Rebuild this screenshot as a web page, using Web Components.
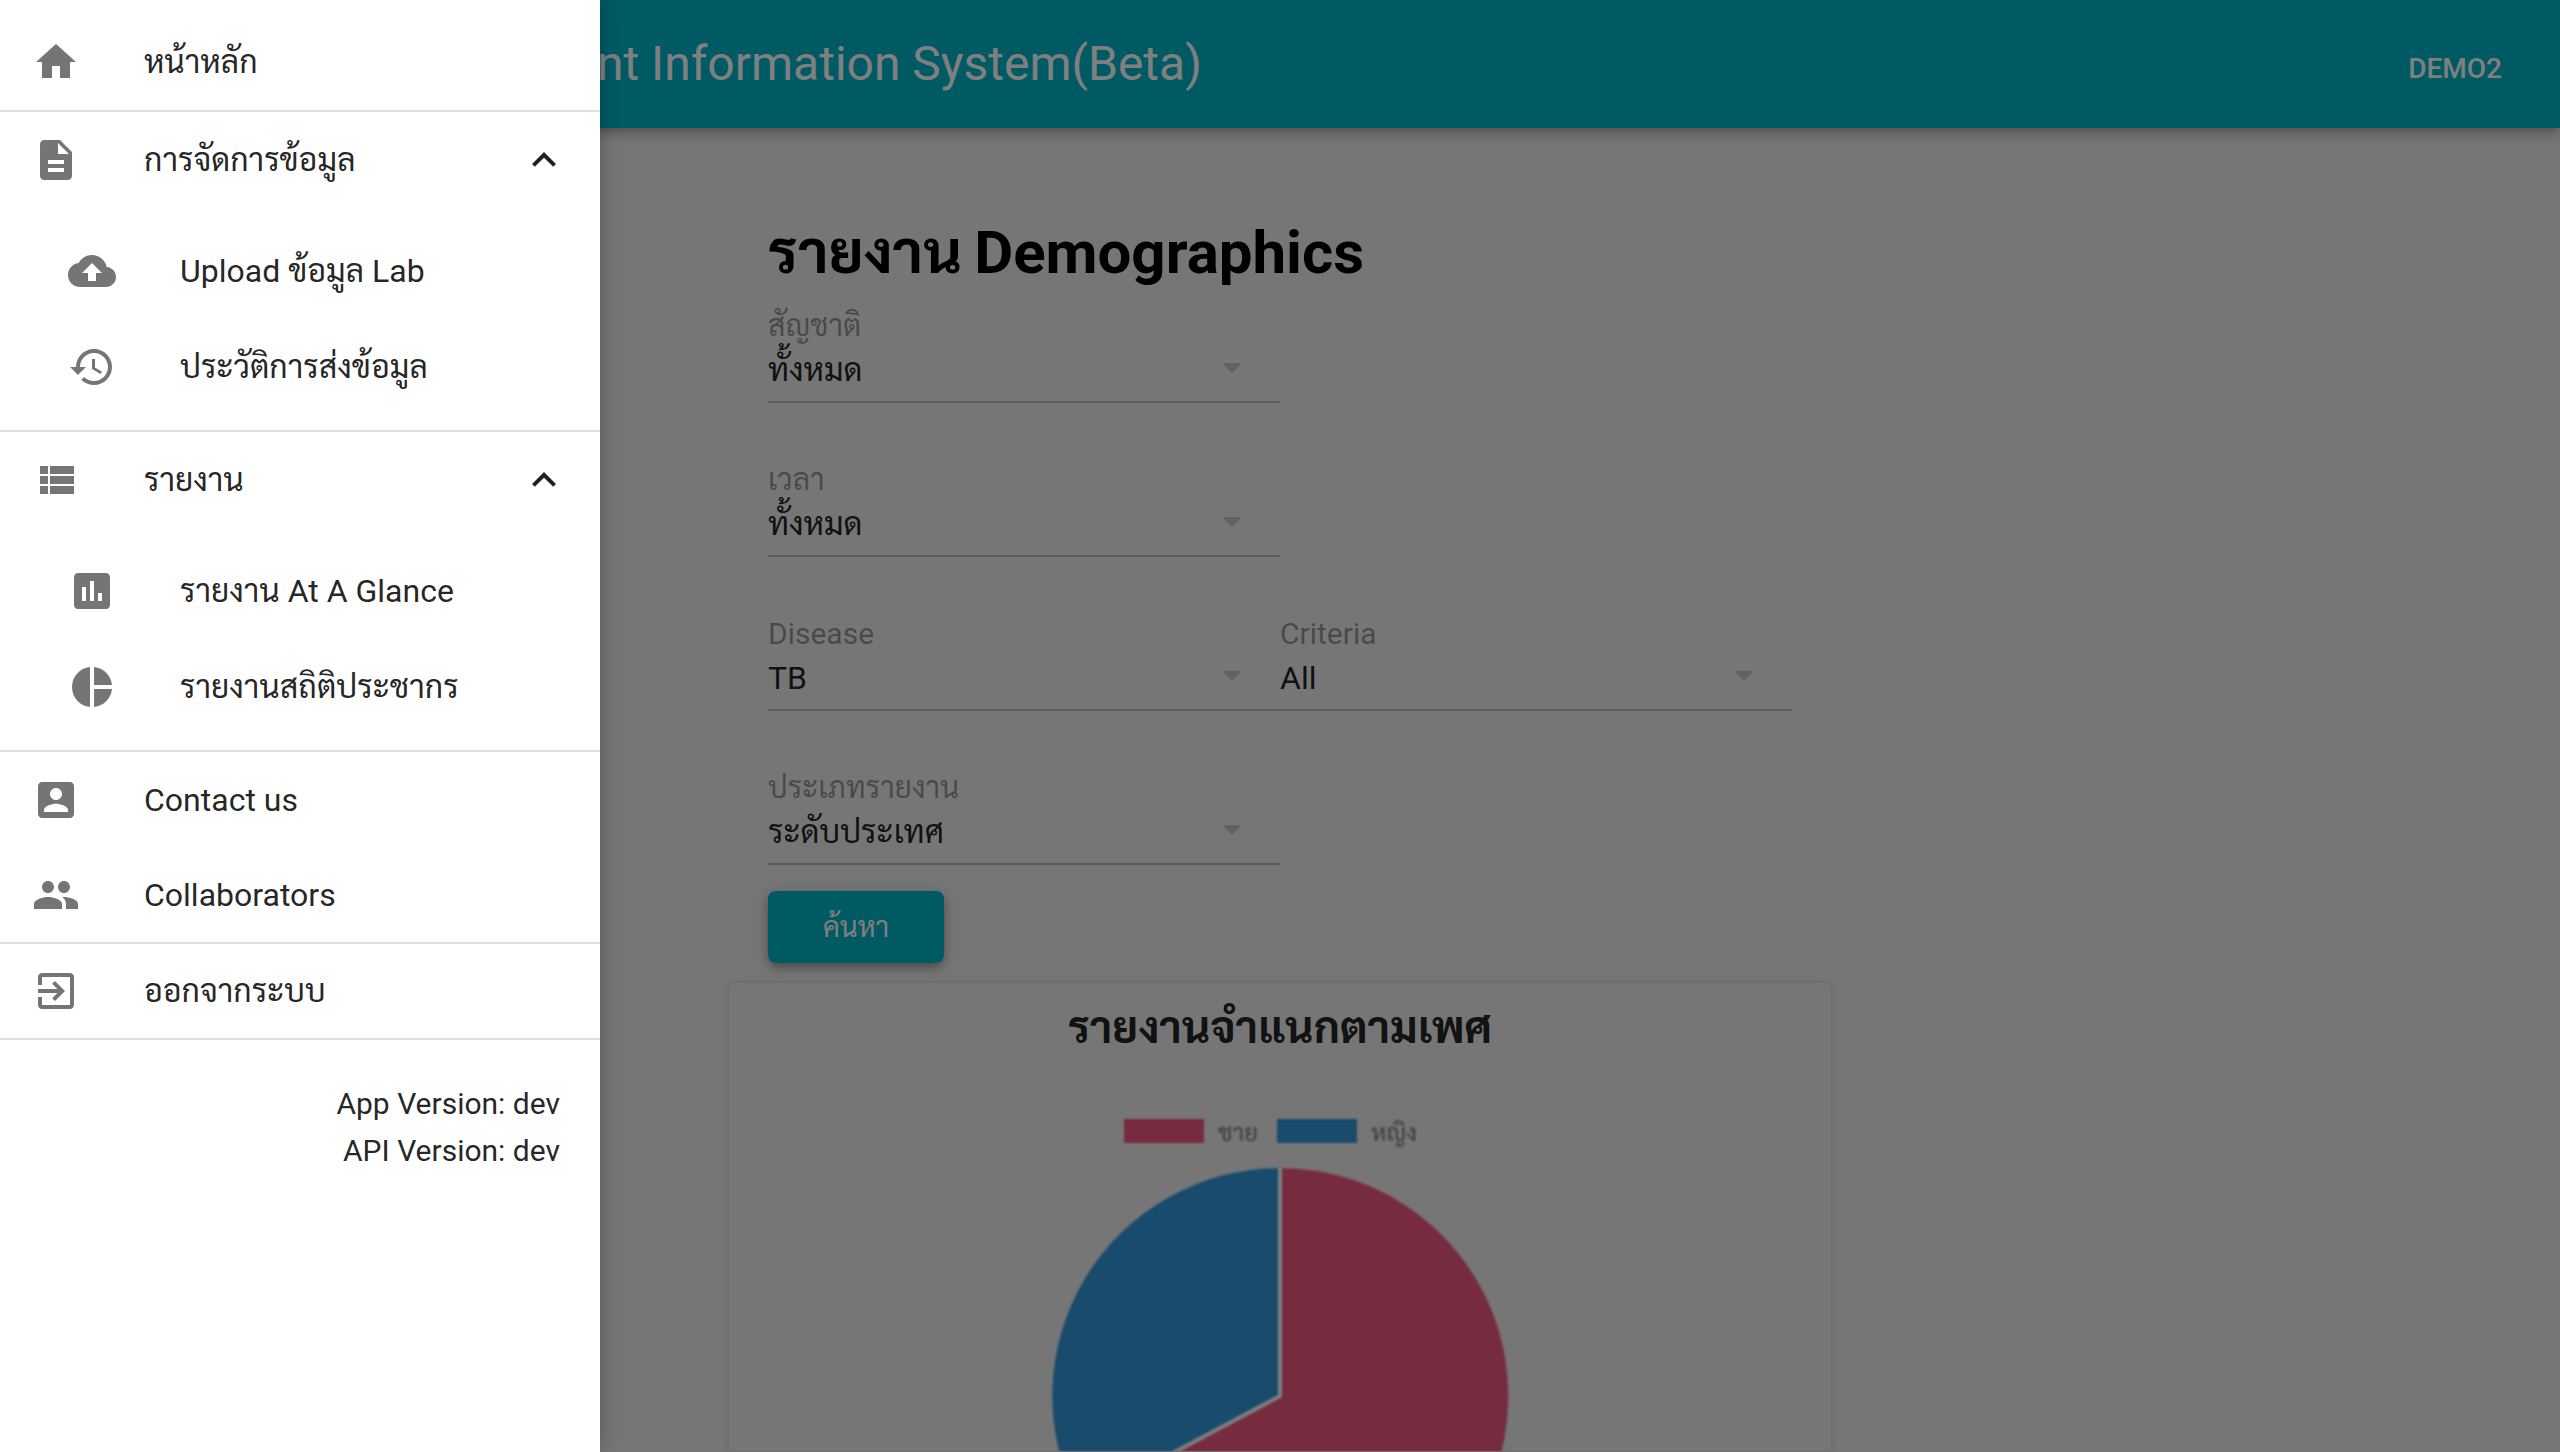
<!DOCTYPE html>
<html lang="th"><head><meta charset="utf-8"><title>Demographics</title>
<style>
html,body{margin:0;padding:0;height:1452px;overflow:hidden;background:#ececec}
body{font-family:Roboto,Sarabun,sans-serif;color:rgba(0,0,0,.87);position:relative}
</style></head><body>
<top-bar name="Patient Information System(Beta)" user="DEMO2"></top-bar>
<report-page heading="รายงาน Demographics">
  <form-select label="สัญชาติ" value="ทั้งหมด"></form-select>
  <form-select label="เวลา" value="ทั้งหมด" style="grid-column:1"></form-select>
  <form-select label="Disease" value="TB" style="grid-column:1"></form-select>
  <form-select label="Criteria" value="All"></form-select>
  <form-select label="ประเภทรายงาน" value="ระดับประเทศ" style="grid-column:1"></form-select>
  <action-button slot="action">ค้นหา</action-button>
  <chart-card slot="chart" heading="รายงานจำแนกตามเพศ"></chart-card>
</report-page>
<drawer-scrim></drawer-scrim>
<side-drawer>
  <nav-item icon="home" style="margin-top:14px">หน้าหลัก</nav-item>
  <nav-rule></nav-rule>
  <nav-item icon="description" open>การจัดการข้อมูล</nav-item>
  <nav-group>
    <nav-item icon="cloud_upload" nested>Upload ข้อมูล Lab</nav-item>
    <nav-item icon="history" nested>ประวัติการส่งข้อมูล</nav-item>
  </nav-group>
  <nav-rule></nav-rule>
  <nav-item icon="view_list" open>รายงาน</nav-item>
  <nav-group>
    <nav-item icon="assessment" nested>รายงาน At A Glance</nav-item>
    <nav-item icon="pie_chart" nested>รายงานสถิติประชากร</nav-item>
  </nav-group>
  <nav-rule></nav-rule>
  <nav-item icon="account_box" style="height:95px">Contact us</nav-item>
  <nav-item icon="people" style="height:95px">Collaborators</nav-item>
  <nav-rule></nav-rule>
  <nav-item icon="exit_to_app" style="height:94px">ออกจากระบบ</nav-item>
  <nav-rule></nav-rule>
  <version-note><div>App Version: dev</div><div>API Version: dev</div></version-note>
</side-drawer>
<script>
const ICONS={
home:"M10 20v-6h4v6h5v-8h3L12 3 2 12h3v8z",
description:"M14 2H6c-1.1 0-1.99.9-1.99 2L4 20c0 1.1.89 2 1.99 2H18c1.1 0 2-.9 2-2V8l-6-6zm2 16H8v-2h8v2zm0-4H8v-2h8v2zm-3-5V3.5L18.5 9H13z",
expand_less:"M12 8l-6 6 1.41 1.41L12 10.83l4.59 4.58L18 14z",
cloud_upload:"M19.35 10.04C18.67 6.59 15.64 4 12 4 9.11 4 6.6 5.64 5.35 8.04 2.34 8.36 0 10.91 0 14c0 3.31 2.69 6 6 6h13c2.76 0 5-2.24 5-5 0-2.64-2.05-4.78-4.65-4.96zM14 13v4h-4v-4H7l5-5 5 5h-3z",
history:"M13 3c-4.97 0-9 4.03-9 9H1l3.89 3.89.07.14L9 12H6c0-3.87 3.13-7 7-7s7 3.13 7 7-3.13 7-7 7c-1.93 0-3.68-.79-4.94-2.06l-1.42 1.42C8.27 19.99 10.51 21 13 21c4.97 0 9-4.03 9-9s-4.03-9-9-9zm-1 5v5l4.28 2.54.72-1.21-3.5-2.08V8H12z",
view_list:"M4 14h4v-4H4v4zm0 5h4v-4H4v4zM4 9h4V5H4v4zm5 5h12v-4H9v4zm0 5h12v-4H9v4zM9 5v4h12V5H9z",
assessment:"M19 3H5c-1.1 0-2 .9-2 2v14c0 1.1.9 2 2 2h14c1.1 0 2-.9 2-2V5c0-1.1-.9-2-2-2zM9 17H7v-7h2v7zm4 0h-2V7h2v10zm4 0h-2v-4h2v4z",
pie_chart:"M11 2v20c-5.07-.5-9-4.79-9-10s3.93-9.5 9-10zm2.03 0v8.99H22c-.47-4.74-4.24-8.52-8.97-8.99zm0 11.01V22c4.74-.47 8.5-4.25 8.97-8.99h-8.97z",
account_box:"M3 5v14c0 1.1.89 2 2 2h14c1.1 0 2-.9 2-2V5c0-1.1-.9-2-2-2H5c-1.11 0-2 .9-2 2zm12 4c0 1.66-1.34 3-3 3s-3-1.34-3-3 1.34-3 3-3 3 1.34 3 3zm-9 8c0-2 4-3.1 6-3.1s6 1.1 6 3.1v1H6v-1z",
people:"M16 11c1.66 0 2.99-1.34 2.99-3S17.66 5 16 5c-1.66 0-3 1.34-3 3s1.34 3 3 3zm-8 0c1.66 0 2.99-1.34 2.99-3S9.66 5 8 5C6.34 5 5 6.34 5 8s1.34 3 3 3zm0 2c-2.33 0-7 1.17-7 3.5V19h14v-2.5c0-2.33-4.67-3.5-7-3.5zm8 0c-.29 0-.62.02-.97.05 1.16.84 1.97 1.97 1.97 3.45V19h6v-2.5c0-2.33-4.67-3.5-7-3.5z",
exit_to_app:"M10.09 15.59L11.5 17l5-5-5-5-1.41 1.41L12.67 11H3v2h9.67l-2.58 2.59zM19 3H5c-1.11 0-2 .9-2 2v4h2V5h14v14H5v-4H3v4c0 1.1.89 2 2 2h14c1.1 0 2-.9 2-2V5c0-1.1-.9-2-2-2z"
};
function el(name,html){
  customElements.define(name,class extends HTMLElement{
    connectedCallback(){
      if(this.shadowRoot)return;
      const r=this.attachShadow({mode:"open"});
      r.innerHTML=typeof html==="function"?html(this):html;
    }
  });
}
const attr=(e,n)=>e.getAttribute(n)||"";
el("mat-icon",e=>`<style>:host{display:block;width:48px;height:48px;flex:none;color:inherit}svg{display:block;width:48px;height:48px;fill:currentColor}</style><svg viewBox="0 0 24 24"><path d="${ICONS[attr(e,"name")]}"/></svg>`);
el("top-bar",e=>`<style>
:host{display:flex;height:128px;background:#00b4c8;color:#fff;align-items:center;box-shadow:0 4px 8px -2px rgba(0,0,0,.2),0 8px 10px 0 rgba(0,0,0,.14);position:relative}
.t{flex:1;font-size:48px;line-height:56px;padding-left:488px;margin-top:-1px;white-space:nowrap}
.u{font-size:28px;font-weight:500;line-height:32px;padding-right:58px;margin-top:9px}
</style><div class="t">${attr(e,"name")}</div><div class="u">${attr(e,"user")}</div>`);
el("report-page",e=>`<style>
:host{display:block;width:1024px;margin:0 auto;padding-top:89px}
h1{margin:0 0 14px;font-size:60px;line-height:72px;font-weight:700;color:#000;word-spacing:-3px}
.g{display:grid;grid-template-columns:512px 512px;row-gap:54px}
.a{margin-top:26px}
.c{margin:20px -39px 0}
</style><h1>${attr(e,"heading")}</h1><div class="g"><slot></slot></div><div class="a"><slot name="action"></slot></div><div class="c"><slot name="chart"></slot></div>`);
el("form-select",e=>`<style>
:host{display:block;width:512px;height:100px;box-sizing:border-box;border-bottom:2px solid rgba(0,0,0,.22);position:relative;color:rgba(0,0,0,.87)}
.l{height:44px;padding-top:1px;font-size:30px;line-height:44px;color:rgba(0,0,0,.38);white-space:nowrap}
.v{font-size:32px;line-height:42px;margin-top:1px;white-space:nowrap}
svg{position:absolute;right:24px;top:40px;width:48px;height:48px;fill:rgba(0,0,0,.17)}
</style><div class="l">${attr(e,"label")}</div><div class="v">${attr(e,"value")}</div><svg viewBox="0 0 24 24"><path d="M7 10l5 5 5-5z"/></svg>`);
el("action-button",`<style>
:host{display:flex;width:176px;height:72px;box-sizing:border-box;padding-top:2px;align-items:center;justify-content:center;background:#00b4c8;color:#fff;border-radius:8px;font-size:28px;line-height:40px;box-shadow:0 6px 10px -2px rgba(0,0,0,.2),0 4px 10px 0 rgba(0,0,0,.14),0 2px 20px 0 rgba(0,0,0,.12)}
</style><slot></slot>`);
el("chart-card",e=>`<style>
:host{display:block;height:468px;overflow:hidden;border-radius:8px 8px 0 0;background:#ededed;box-shadow:0 0 6px 0 rgba(0,0,0,.14)}
h2{margin:0;padding-top:21px;text-align:center;font-size:44px;line-height:48px;font-weight:700;color:rgba(0,0,0,.87)}
gender-pie{margin-top:67px}
</style><h2>${attr(e,"heading")}</h2><gender-pie></gender-pie>`);
el("gender-pie",`<style>
:host{display:block;filter:blur(.8px)}
.lg{display:flex;height:24px;align-items:center;padding-left:395px;font-size:24px;color:#777}
i{display:block;width:80px;height:24px}
span{margin:0 19px 0 14px;white-space:nowrap}
svg{display:block;margin-top:25px;width:1100px;height:284px}
</style><div class="lg"><i style="background:#ec587c"></i><span>ชาย</span><i style="background:#3296da"></i><span>หญิง</span></div>
<svg viewBox="0 0 1100 284">
<path fill="#ec587c" d="M551 228L551 0A228 228 0 1 1 350 335Z"/>
<path fill="#3296da" d="M551 228L350 335A228 228 0 0 1 551 0Z"/>
<path fill="none" stroke="#fff" stroke-width="4" stroke-linejoin="round" d="M551 0L551 228L350 335"/></svg>`);
el("drawer-scrim",`<style>:host{position:absolute;inset:0;background:rgba(0,0,0,.5)}</style>`);
el("side-drawer",`<style>
:host{position:absolute;left:0;top:0;bottom:0;width:600px;background:#fff;display:flex;flex-direction:column;box-shadow:0 0 20px 0 rgba(0,0,0,.25)}
</style><slot></slot>`);
el("nav-rule",`<style>:host{display:block;height:2px;background:#e0e0e0;flex:none}</style>`);
el("nav-group",`<style>:host{display:block;padding:15px 0}</style><slot></slot>`);
el("nav-item",e=>{
 const nested=e.hasAttribute("nested"),open=e.hasAttribute("open");
 return `<style>
:host{display:flex;height:96px;flex:none;align-items:center;padding-left:${nested?68:32}px;box-sizing:border-box;font-size:32px;color:rgba(0,0,0,.87);white-space:nowrap}
mat-icon{color:#757575}
.t{flex:1;margin-left:64px;line-height:48px}
.c{color:rgba(0,0,0,.87);margin-right:32px}
</style><mat-icon name="${attr(e,"icon")}"></mat-icon><div class="t"><slot></slot></div>${open?'<mat-icon class="c" name="expand_less"></mat-icon>':""}`});
el("version-note",`<style>:host{display:block;padding:40px 40px 0 0;text-align:right;font-size:30px;line-height:47px;color:rgba(0,0,0,.87)}</style><slot></slot>`);
</script>
</body></html>
